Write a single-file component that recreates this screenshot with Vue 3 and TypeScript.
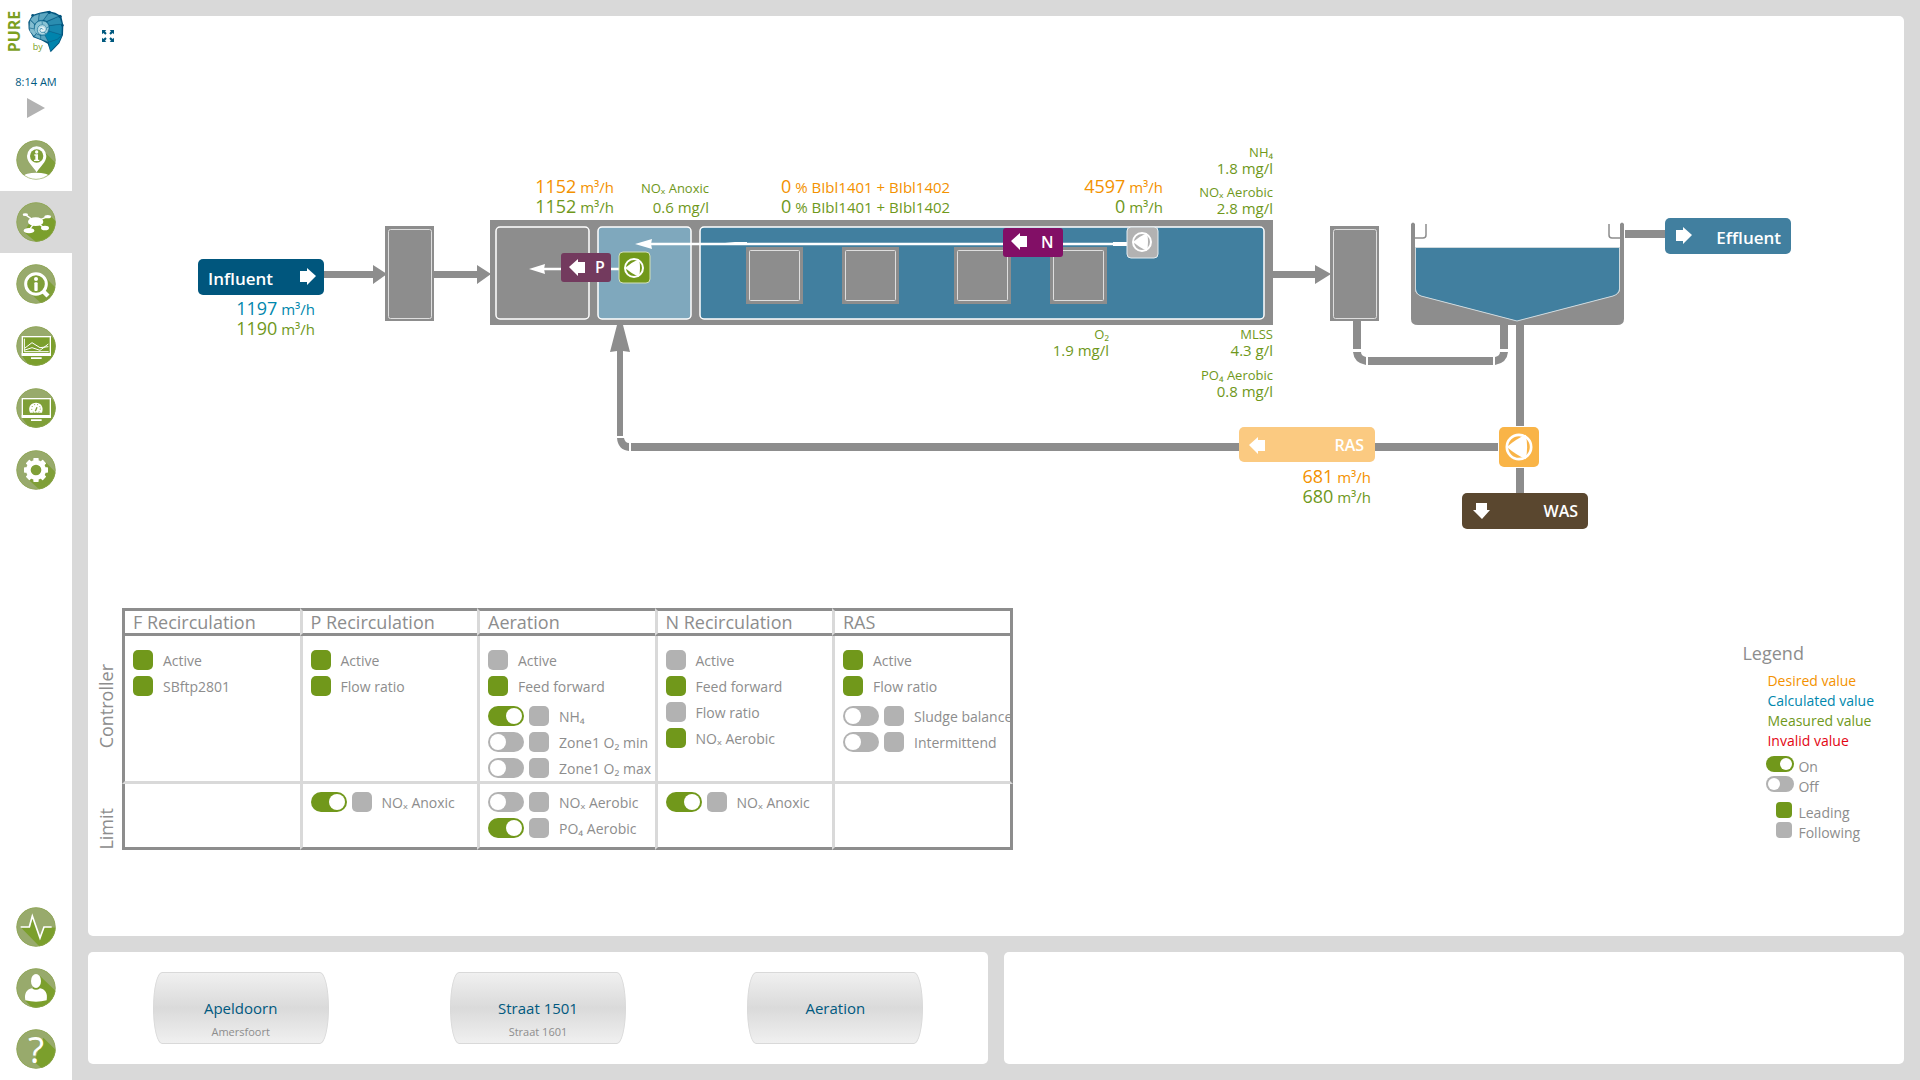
<script setup lang="ts">
import { reactive } from 'vue'

interface Item {
  label: string
  leading: boolean
  enabled?: boolean
}

interface Column {
  name: string
  controller: Item[]
  limit: Item[]
}

const columns = reactive<Column[]>([
  {
    name: 'F Recirculation',
    controller: [
      { label: 'Active', leading: true },
      { label: 'SBftp2801', leading: true },
    ],
    limit: [],
  },
  {
    name: 'P Recirculation',
    controller: [
      { label: 'Active', leading: true },
      { label: 'Flow ratio', leading: true },
    ],
    limit: [{ label: 'NOₓ Anoxic', leading: false, enabled: true }],
  },
  {
    name: 'Aeration',
    controller: [
      { label: 'Active', leading: false },
      { label: 'Feed forward', leading: true },
      { label: 'NH₄', leading: false, enabled: true },
      { label: 'Zone1 O₂ min', leading: false, enabled: false },
      { label: 'Zone1 O₂ max', leading: false, enabled: false },
    ],
    limit: [
      { label: 'NOₓ Aerobic', leading: false, enabled: false },
      { label: 'PO₄ Aerobic', leading: false, enabled: true },
    ],
  },
  {
    name: 'N Recirculation',
    controller: [
      { label: 'Active', leading: false },
      { label: 'Feed forward', leading: true },
      { label: 'Flow ratio', leading: false },
      { label: 'NOₓ Aerobic', leading: true },
    ],
    limit: [{ label: 'NOₓ Anoxic', leading: false, enabled: true }],
  },
  {
    name: 'RAS',
    controller: [
      { label: 'Active', leading: true },
      { label: 'Flow ratio', leading: true },
      { label: 'Sludge balance', leading: false, enabled: false },
      { label: 'Intermittend', leading: false, enabled: false },
    ],
    limit: [],
  },
])

const sections = [
  { key: 'controller', title: 'Controller' },
  { key: 'limit', title: 'Limit' },
] as const

const legendValues = [
  { label: 'Desired value', tone: 'desired' },
  { label: 'Calculated value', tone: 'calculated' },
  { label: 'Measured value', tone: 'measured' },
  { label: 'Invalid value', tone: 'invalid' },
]

/* Flow readings: number followed by its unit, right aligned on x */
const flows = [
  { value: '1197', x: 315, y: 315, tone: 'calculated' },
  { value: '1190', x: 315, y: 335, tone: 'measured' },
  { value: '1152', x: 614, y: 193, tone: 'desired' },
  { value: '1152', x: 614, y: 213, tone: 'measured' },
  { value: '4597', x: 1163, y: 193, tone: 'desired' },
  { value: '0', x: 1163, y: 213, tone: 'measured' },
  { value: '681', x: 1371, y: 483, tone: 'desired' },
  { value: '680', x: 1371, y: 503, tone: 'measured' },
]

/* Sensor readings: name above, value below */
const sensors = [
  { name: 'NOₓ Anoxic', value: '0.6 mg/l', x: 709, y: 193, step: 20 },
  { name: 'NH₄', value: '1.8 mg/l', x: 1273, y: 157, step: 17 },
  { name: 'NOₓ Aerobic', value: '2.8 mg/l', x: 1273, y: 197, step: 17 },
  { name: 'O₂', value: '1.9 mg/l', x: 1109, y: 339, step: 17 },
  { name: 'MLSS', value: '4.3 g/l', x: 1273, y: 339, step: 17 },
  { name: 'PO₄ Aerobic', value: '0.8 mg/l', x: 1273, y: 380, step: 17 },
]

const aerators = [746, 842, 954, 1050]

const tanks = [
  { title: 'Apeldoorn', subtitle: 'Amersfoort' },
  { title: 'Straat 1501', subtitle: 'Straat 1601' },
  { title: 'Aeration', subtitle: '' },
]

const teeth = [0, 45, 90, 135, 180, 225, 270, 315]
</script>

<template>
  <div class="app">
    <aside class="sidebar">
      <svg class="logo" viewBox="0 0 216 180" role="img" aria-label="PURE">
        <text class="pure" transform="translate(60 157) rotate(-90)">PURE</text>
        <text class="by" x="98" y="150">by</text>
        <path fill="#00537c" d="M86 88 85 66 97 45 118 38 144 33 166 38 184 49 190 76 189 105 178 130 152 157 143 131 124 121 100 112Z" />
        <g stroke="#0f6288" stroke-width="1">
          <path fill="#0084ad" d="M151 154 146 127 172 118 186 106 176 128Z" />
          <path fill="#0084ad" d="M146 126 134 106 148 94 185 105 172 118Z" />
          <path fill="#1687ae" d="M147 93 148 77 186 73 185 104Z" />
          <path fill="#2b8db0" d="M148 76 141 65 178 49 186 72Z" />
          <path fill="#459ab8" d="M140 64 131 60 148 37 177 48Z" />
          <path fill="#5ba6c0" d="M130 60 116 62 118 41 147 37Z" />
          <path fill="#6db0c7" d="M115 62 104 72 91 59 99 48 117 42Z" />
          <path fill="#83bdd0" d="M103 73 102 87 88 83 90 60Z" />
          <path fill="#83bdd0" d="M102 87 109 100 102 109 90 94 88 84Z" />
          <path fill="#6db0c7" d="M109 101 122 107 122 118 103 110Z" />
          <path fill="#5ba6c0" d="M123 106 134 105 145 126 122 118Z" />
        </g>
        <path fill="#8ac3d4" d="M103 88Q102 62 126 62 148 64 147 86 144 105 126 106 106 104 103 88Z" />
        <path fill="#b5dae4" d="M112 89Q112 74 127 73 144 76 142 92 137 103 125 102 113 99 112 89Z" />
        <path fill="#e6f3f6" d="M117 89Q119 79 128 80 137 83 134 92 128 98 121 96Z" />
        <path fill="none" stroke="#1a7399" stroke-width="2" d="M103 88Q102 62 126 62 148 64 147 86 144 105 126 106 111 103 112 88 114 74 128 74 142 77 139 91 134 100 124 97 117 93 121 86 127 83 129 89M126 62 127 73M146 80 140 84M137 102 133 96" />
        <g fill="#00537c">
          <circle cx="148" cy="37" r="5" /><circle cx="180" cy="49" r="5" /><circle cx="187" cy="76" r="4" /><circle cx="98" cy="46" r="4" />
        </g>
      </svg>
      <time class="clock">8:14 AM</time>
      <button class="play" type="button" aria-label="Play">
        <svg viewBox="0 0 18 20"><path fill="#b2b2b2" d="M0 0 18 10 0 20Z" /></svg>
      </button>

      <svg class="defs" aria-hidden="true">
        <defs>
          <clipPath id="disc"><circle cx="60" cy="60" r="59" /></clipPath>
        </defs>
      </svg>

      <nav class="nav" aria-label="Views">
        <button type="button" aria-label="Location">
          <svg viewBox="0 0 120 120">
            <g clip-path="url(#disc)">
              <circle cx="60" cy="60" r="60" fill="#98aa6c" />
              <path fill="#7f9f38" d="M82 32 120 70V120H88L62 98Z" />
              <ellipse cx="61" cy="110" rx="38" ry="12" fill="#fff" />
              <path fill="#fff" d="M62 97C50 78 33 66 33 48a29 29 0 0 1 58 0C91 66 74 78 62 97Z" />
              <circle cx="62" cy="48" r="20" fill="#7f9f38" />
              <circle cx="62" cy="36" r="5" fill="#fff" />
              <path fill="#fff" d="M55 43H66V59H70V63H54V59H58V47H55Z" />
              <circle class="rim" cx="60" cy="60" r="58" />
            </g>
          </svg>
        </button>
        <button class="active" type="button" aria-label="Process">
          <svg viewBox="0 0 120 120">
            <g clip-path="url(#disc)">
              <circle cx="60" cy="60" r="60" fill="#98aa6c" />
              <path fill="#7b9f2c" d="M40 64 102 42 120 58V120H60L24 90Z" />
              <path stroke="#fff" stroke-width="4" d="M28 38 58 59 95 44M38 86 58 59 86 78" fill="none" />
              <g fill="#fff">
                <ellipse cx="59" cy="59" rx="23" ry="13" /><ellipse cx="28" cy="38" rx="8" ry="4" />
                <ellipse cx="95" cy="44" rx="10" ry="5" /><ellipse cx="39" cy="86" rx="16" ry="8" /><ellipse cx="87" cy="78" rx="12" ry="7" />
              </g>
              <circle class="rim" cx="60" cy="60" r="58" />
            </g>
          </svg>
        </button>
        <button type="button" aria-label="Inspect">
          <svg viewBox="0 0 120 120">
            <g clip-path="url(#disc)">
              <circle cx="60" cy="60" r="60" fill="#98aa6c" />
              <path fill="#7f9f38" d="M84 36 120 72V120H78L38 84Z" />
              <path stroke="#fff" stroke-width="13" d="M80 80 96 96" />
              <circle cx="60" cy="60" r="31" fill="#7f9f38" stroke="#fff" stroke-width="9" />
              <circle cx="60" cy="45" r="6" fill="#fff" />
              <rect x="55" y="55" width="10" height="26" rx="3" fill="#fff" />
              <circle class="rim" cx="60" cy="60" r="58" />
            </g>
          </svg>
        </button>
        <button type="button" aria-label="Trends">
          <svg viewBox="0 0 120 120">
            <g clip-path="url(#disc)">
              <circle cx="60" cy="60" r="60" fill="#98aa6c" />
              <path fill="#7b9f2c" d="M104 30 120 46V120H40L17 88Z" />
              <rect x="19" y="32" width="84" height="54" fill="#7b9f2c" stroke="#fff" stroke-width="4" />
              <path fill="#fff" d="M17 81H105V90H17ZM45 94H77V99H45Z" />
              <g fill="none" stroke="#fff" stroke-width="3">
                <path d="M25 38V77H98M27 66 48 50 72 65 97 62" />
                <path d="M27 72 48 65 72 73 97 54" />
              </g>
              <circle class="rim" cx="60" cy="60" r="58" />
            </g>
          </svg>
        </button>
        <button type="button" aria-label="Dashboard">
          <svg viewBox="0 0 120 120">
            <g clip-path="url(#disc)">
              <circle cx="60" cy="60" r="60" fill="#98aa6c" />
              <path fill="#7f9f38" d="M104 30 120 46V120H40L17 88Z" />
              <rect x="19" y="32" width="84" height="54" fill="#7f9f38" stroke="#fff" stroke-width="4" />
              <path fill="#fff" d="M17 81H105V90H17ZM45 94H77V99H45Z" />
              <path fill="#fff" d="M42 74C34 56 46 44 60 44S84 56 78 74Z" />
              <circle cx="60" cy="62" r="13" fill="none" stroke="#7f9f38" stroke-width="3" stroke-dasharray="3 6" />
              <path stroke="#7f9f38" stroke-width="4" d="M58 70 63 58" />
              <circle class="rim" cx="60" cy="60" r="58" />
            </g>
          </svg>
        </button>
        <button type="button" aria-label="Settings">
          <svg viewBox="0 0 120 120">
            <g clip-path="url(#disc)">
              <circle cx="60" cy="60" r="60" fill="#98aa6c" />
              <path fill="#7f9f38" d="M86 34 120 68V120H72L34 86Z" />
              <rect v-for="a in teeth" :key="a" x="52" y="24" width="16" height="14" rx="2" fill="#fff" :transform="`rotate(${a} 60 60)`" />
              <circle cx="60" cy="60" r="23" fill="#7f9f38" stroke="#fff" stroke-width="14" />
              <circle class="rim" cx="60" cy="60" r="58" />
            </g>
          </svg>
        </button>
      </nav>

      <nav class="nav nav-bottom" aria-label="General">
        <button type="button" aria-label="Status">
          <svg viewBox="0 0 120 120">
            <g clip-path="url(#disc)">
              <circle cx="60" cy="60" r="60" fill="#98aa6c" />
              <path fill="#7b9f2c" d="M14 61 42 61 50 28 72 92 86 60 120 62V120H72Z" />
              <path fill="none" stroke="#fff" stroke-width="5" d="M14 60H40L49 27 72 93 84 60H107" />
              <circle class="rim" cx="60" cy="60" r="58" />
            </g>
          </svg>
        </button>
        <button type="button" aria-label="Account">
          <svg viewBox="0 0 120 120">
            <g clip-path="url(#disc)">
              <circle cx="60" cy="60" r="60" fill="#98aa6c" />
              <path fill="#7b9f2c" d="M72 24 120 70V120H50L28 98Z" />
              <ellipse cx="60" cy="39" rx="15" ry="21" fill="#fff" />
              <path fill="#fff" d="M48 61Q60 70 72 61C88 64 96 76 92 97Q60 105 28 97C24 76 32 64 48 61Z" />
              <circle class="rim" cx="60" cy="60" r="58" />
            </g>
          </svg>
        </button>
        <button type="button" aria-label="Help">
          <svg viewBox="0 0 120 120">
            <g clip-path="url(#disc)">
              <circle cx="60" cy="60" r="60" fill="#98aa6c" />
              <path fill="#7b9f2c" d="M82 26 120 64V120H80L54 98Z" />
              <circle class="rim" cx="60" cy="60" r="58" />
            </g>
            <text class="mark" x="60" y="101" text-anchor="middle">?</text>
          </svg>
        </button>
      </nav>
    </aside>

    <main class="main">
      <section class="panel process">
        <div class="toolbar">
          <button class="expand" type="button" aria-label="Full screen">
            <svg viewBox="0 0 36 36">
              <g fill="#00597f">
                <path d="M0 0H13L9 4 14 10 10 14 4 9 0 13Z" />
                <path d="M36 0H23L27 4 22 10 26 14 32 9 36 13Z" />
                <path d="M0 36H13L9 32 14 26 10 22 4 27 0 23Z" />
                <path d="M36 36H23L27 32 22 26 26 22 32 27 36 23Z" />
              </g>
            </svg>
          </button>
        </div>

        <svg class="diagram" viewBox="88 50 1816 526" role="img" aria-label="Process diagram">
          <defs>
            <path id="arrow" fill="#fff" d="M0 3H7V0L16 8 7 17V14H0Z" />
            <g id="pump">
              <circle r="9" fill="none" stroke="#fff" stroke-width="2" />
              <path fill="#fff" d="M-9 0Q-2-6 5-9Q7 0 5 9Q-2 6-9 0Z" />
            </g>
          </defs>

          <!-- Pipes -->
          <g fill="#8d8d8d">
            <path d="M324 271H373V265L387 274 373 284V278H324Z" />
            <path d="M434 271H477V265L491 274 477 284V278H434Z" />
            <path d="M1273 271H1315V265L1331 274 1315 284V278H1273Z" />
            <path d="M617 436V351L610 352 617 325H623L630 352 623 351V436Z" />
            <path d="M617 438H624Q625 443 629 443V451Q618 450 617 438Z" />
            <rect x="631" y="443" width="609" height="8" />
            <rect x="1374" y="443" width="124" height="8" />
            <rect x="1353" y="320" width="8" height="29" />
            <path d="M1353 352H1361Q1361 356 1366 357V365Q1354 363 1353 352Z" />
            <rect x="1368" y="357" width="125" height="8" />
            <path d="M1508 352H1500Q1500 356 1495 357V365Q1507 363 1508 352Z" />
            <rect x="1500" y="324" width="8" height="25" />
            <rect x="1516" y="324" width="8" height="102" />
            <rect x="1516" y="468" width="8" height="26" />
            <rect x="1625" y="230" width="41" height="8" />
          </g>

          <!-- Basins -->
          <g fill="#8d8d8d">
            <rect x="385" y="226" width="49" height="95" />
            <rect x="490" y="220" width="783" height="105" />
            <rect x="1330" y="226" width="49" height="95" />
          </g>
          <g fill="none" stroke="#dedede">
            <rect x="388.5" y="229.5" width="43" height="89" rx="2" />
            <rect x="1333.5" y="229.5" width="43" height="89" rx="2" />
          </g>
          <g stroke="#fff" stroke-width="1.5">
            <rect x="496" y="227" width="93" height="92" rx="4" fill="#8d8d8d" />
            <rect x="598" y="227" width="93" height="92" rx="4" fill="#7fa8bd" />
            <rect x="700" y="227" width="564" height="92" rx="4" fill="#417f9f" />
          </g>
          <g v-for="x in aerators" :key="x" fill="#8d8d8d">
            <rect :x="x" y="247" width="57" height="57" />
            <rect :x="x + 3.5" y="250.5" width="50" height="50" rx="1" stroke="#dedede" />
          </g>

          <!-- Internal recirculation -->
          <path fill="none" stroke="#fff" stroke-width="2.5" d="M650 244H1127M543 269H620" />
          <path fill="#fff" d="M635 244 652 239 651 244 652 249ZM529 269 545 264 544 269 545 274ZM725 243 735 242H747V245H735ZM1113 242H1127V246H1113Z" />
          <rect x="561" y="253" width="50" height="29" rx="3" fill="#733a5e" />
          <use href="#arrow" transform="translate(585 259) scale(-1 1)" />
          <text class="tag" x="595" y="273">P</text>
          <rect x="619" y="252" width="31" height="31" rx="4" fill="#71981b" stroke="#d4e0ba" />
          <use href="#pump" x="634" y="268" />
          <rect x="1003" y="228" width="60" height="29" rx="3" fill="#820f66" />
          <use href="#arrow" transform="translate(1027 233) scale(-1 1)" />
          <text class="tag" x="1041" y="248">N</text>
          <rect x="1127" y="227" width="31" height="31" rx="4" fill="#b2b2b2" stroke="#e4edf1" />
          <use href="#pump" x="1142" y="242" />

          <!-- Clarifier -->
          <path fill="#8d8d8d" d="M1411 224Q1413 221 1415 224V289Q1415 294 1421 296L1517 321 1613 296Q1620 294 1620 289V224Q1622 221 1624 224V319Q1624 325 1617 325H1418Q1411 325 1411 319Z" />
          <path fill="#417f9f" stroke="#cfd9dd" d="M1415.500 247.500H1619.500V289Q1619 294 1613 296L1517 321 1421 296Q1416 294 1415.500 289Z" />
          <path fill="none" stroke="#8d8d8d" stroke-width="1.500" d="M1426 224V235Q1426 238 1423 238H1414M1609 224V235Q1609 238 1612 238H1622" />

          <!-- Labelled streams -->
          <rect x="198" y="259" width="126" height="36" rx="5" fill="#00567d" />
          <use href="#arrow" x="300" y="268" />
          <text class="tag stream" x="208" y="285">Influent</text>

          <rect x="1665" y="218" width="126" height="36" rx="5" fill="#417f9f" />
          <use href="#arrow" x="1676" y="227" />
          <text class="tag stream" x="1781" y="244" text-anchor="end">Effluent</text>

          <rect x="1239" y="427" width="136" height="35" rx="5" fill="#fbca81" />
          <use href="#arrow" transform="translate(1265 437) scale(-1 1)" />
          <text class="tag" x="1364" y="451" text-anchor="end">RAS</text>

          <rect x="1499" y="427" width="40" height="40" rx="5" fill="#f9b447" />
          <use href="#pump" transform="translate(1519 447) scale(1.350)" />

          <rect x="1462" y="493" width="126" height="36" rx="5" fill="#5a472f" />
          <use href="#arrow" transform="translate(1490 503) rotate(90)" />
          <text class="tag" x="1578" y="517" text-anchor="end">WAS</text>

          <!-- Readings -->
          <text v-for="f in flows" :key="`${f.x}-${f.y}`" :class="f.tone" :x="f.x" :y="f.y" text-anchor="end">
            <tspan class="number">{{ f.value }}</tspan><tspan class="unit">{{ ' m³/h' }}</tspan>
          </text>
          <text class="desired" x="781" y="193"><tspan class="number">0</tspan><tspan class="unit"> % BIbl1401 + BIbl1402</tspan></text>
          <text class="measured" x="781" y="213"><tspan class="number">0</tspan><tspan class="unit"> % BIbl1401 + BIbl1402</tspan></text>
          <g v-for="s in sensors" :key="s.name" class="measured" text-anchor="end">
            <text class="sensor" :x="s.x" :y="s.y">{{ s.name }}</text>
            <text class="amount" :x="s.x" :y="s.y + s.step">{{ s.value }}</text>
          </g>
        </svg>

        <div class="lower">
          <table class="control">
            <thead>
              <tr>
                <td class="corner"></td>
                <th v-for="c in columns" :key="c.name" scope="col">{{ c.name }}</th>
              </tr>
            </thead>
            <tbody>
              <tr v-for="s in sections" :key="s.key" :class="s.key">
                <th scope="row"><span>{{ s.title }}</span></th>
                <td v-for="c in columns" :key="c.name">
                  <ul>
                    <li v-for="item in c[s.key]" :key="item.label" :class="{ switchable: item.enabled !== undefined }">
                      <label>
                        <input v-if="item.enabled !== undefined" v-model="item.enabled" class="toggle" type="checkbox" role="switch">
                        <i class="lamp" :class="{ lit: item.leading }"></i>
                        <span>{{ item.label }}</span>
                      </label>
                    </li>
                  </ul>
                </td>
              </tr>
            </tbody>
          </table>

          <section class="legend">
            <h2>Legend</h2>
            <ul class="values">
              <li v-for="v in legendValues" :key="v.tone" :class="v.tone">{{ v.label }}</li>
            </ul>
            <ul class="keys">
              <li><i class="pill on"></i>On</li>
              <li><i class="pill"></i>Off</li>
            </ul>
            <ul class="keys">
              <li><i class="lamp lit"></i>Leading</li>
              <li><i class="lamp"></i>Following</li>
            </ul>
          </section>
        </div>
      </section>

      <div class="bottom">
        <section class="panel tanks">
          <button v-for="t in tanks" :key="t.title" class="tank" type="button">
            <span class="title">{{ t.title }}</span>
            <span class="subtitle">{{ t.subtitle }}</span>
          </button>
        </section>
        <section class="panel"></section>
      </div>
    </main>
  </div>
</template>

<style>
body {
  margin: 0;
  background: #d9d9d9;
}
</style>

<style scoped>
.app {
  display: flex;
  min-height: 100vh;
  background: #d9d9d9;
  color: #8d8d8d;
  font-family: "Trebuchet MS", "Open Sans", "Noto Sans", sans-serif;
  font-size: 14px;
}
button {
  padding: 0;
  border: 0;
  background: none;
  font: inherit;
  cursor: pointer;
}
svg {
  display: block;
}
ul {
  margin: 0;
  padding: 0;
  list-style: none;
}

/* Sidebar */
.sidebar {
  display: flex;
  box-sizing: border-box;
  flex: none;
  flex-direction: column;
  align-items: center;
  width: 72px;
  padding-bottom: 1px;
  background: #fff;
}
.logo {
  width: 72px;
  height: 60px;
}
.pure {
  fill: #7b9f1f;
  font-size: 48px;
  font-weight: 700;
}
.by {
  fill: #7b9f1f;
  font-size: 27px;
}
.clock {
  margin-top: 14px;
  color: #00597f;
  font-size: 11px;
  line-height: 16px;
}
.play {
  width: 18px;
  height: 20px;
  margin: 8px 0 11px;
}
.defs {
  width: 0;
  height: 0;
}
.nav {
  display: flex;
  flex-direction: column;
  width: 100%;
}
.nav button {
  display: flex;
  align-items: center;
  justify-content: center;
  height: 62px;
}
.nav .active {
  background: #d9d9d9;
}
.nav svg {
  width: 40px;
  height: 40px;
  overflow: visible;
}
.nav-bottom {
  margin-top: auto;
}
.nav-bottom button {
  height: 61px;
}
.rim {
  fill: none;
  stroke: #8ea650;
  stroke-width: 3px;
  opacity: 0.7;
}
.mark {
  fill: #fff;
  font-size: 112px;
}

/* Panels */
.main {
  display: flex;
  flex: 1;
  flex-direction: column;
  gap: 16px;
  min-width: 0;
  padding: 16px;
}
.panel {
  border-radius: 5px;
  background: #fff;
}
.process {
  flex: 1;
}
.toolbar {
  display: flex;
  padding: 14px 14px 8px;
}
.expand,
.expand svg {
  width: 12px;
  height: 12px;
}
.diagram {
  width: 100%;
  height: auto;
}

/* Diagram text */
.tag {
  fill: #fff;
  font-size: 16px;
  font-weight: 600;
}
.stream {
  font-size: 17px;
}
.number {
  font-size: 18px;
}
.unit,
.amount {
  font-size: 15px;
}
.sensor {
  font-size: 13px;
}
.desired {
  fill: #f39200;
  color: #f39200;
}
.calculated {
  fill: #0087ad;
  color: #0087ad;
}
.measured {
  fill: #6f981b;
  color: #6f981b;
}
.invalid {
  color: #e30613;
}

/* Control table */
.lower {
  display: flex;
  align-items: flex-start;
  justify-content: space-between;
  padding: 32px 30px 16px 8px;
}
.control {
  width: 917px;
  border-collapse: separate;
  border-spacing: 0;
  table-layout: fixed;
}
.corner {
  width: 26px;
}
.control th,
.control td {
  box-sizing: border-box;
  padding: 0;
  text-align: left;
  vertical-align: top;
}
.control thead th {
  height: 28px;
  padding-left: 8px;
  border-top: 3px solid #8d8d8d;
  border-bottom: 3px solid #8d8d8d;
  border-left: 3px solid #d9d9d9;
  font-size: 18px;
  font-weight: 400;
  line-height: 22px;
}
.control thead th:last-child {
  width: 181px;
}
.control tbody td {
  padding-left: 8px;
  border-bottom: 3px solid #d9d9d9;
  border-left: 3px solid #d9d9d9;
}
.control tr > :nth-child(2) {
  border-left-color: #8d8d8d;
}
.control tr > :last-child {
  border-right: 3px solid #8d8d8d;
}
.control .controller td {
  height: 148px;
  padding-top: 14px;
}
.control .limit td {
  height: 66px;
  padding-top: 8px;
  border-bottom-color: #8d8d8d;
}
.control tbody th {
  font-size: 18px;
  font-weight: 400;
  line-height: 20px;
  vertical-align: bottom;
}
.control tbody th span {
  display: block;
  writing-mode: vertical-rl;
  transform: rotate(180deg);
}
.control .controller th {
  padding-bottom: 36px;
}
.control ul {
  display: flex;
  flex-direction: column;
  gap: 6px;
}
.controller li:not(.switchable) + .switchable {
  margin-top: 4px;
}
.control label {
  display: flex;
  align-items: center;
  height: 20px;
  white-space: nowrap;
}
.lamp {
  flex: none;
  width: 20px;
  height: 20px;
  margin-right: 10px;
  border-radius: 5px;
  background: #b2b2b2;
}
.lamp.lit {
  background: #71981b;
}
.toggle {
  flex: none;
  width: 36px;
  height: 20px;
  margin: 0 5px 0 0;
  border-radius: 10px;
  background: #b2b2b2;
  appearance: none;
  cursor: pointer;
}
.toggle::before {
  display: block;
  width: 16px;
  height: 16px;
  margin: 2px;
  border-radius: 50%;
  background: #fff;
  content: "";
}
.toggle:checked {
  background: #71981b;
}
.toggle:checked::before {
  margin-left: 18px;
}

/* Legend */
.legend {
  margin-top: 32px;
}
.legend h2 {
  margin: 0;
  font-size: 18px;
  font-weight: 400;
  line-height: 26px;
}
.legend .values {
  padding: 5px 0 0 25px;
}
.legend li {
  display: flex;
  height: 20px;
  line-height: 20px;
}
.legend .keys {
  padding: 5px 0 1px 24px;
}
.legend .keys li {
  line-height: 22px;
}
.pill {
  width: 28px;
  height: 16px;
  margin-right: 4px;
  border-radius: 8px;
  background: #b2b2b2;
}
.pill::before {
  display: block;
  width: 12px;
  height: 12px;
  margin: 2px;
  border-radius: 50%;
  background: #fff;
  content: "";
}
.pill.on {
  background: #71981b;
}
.pill.on::before {
  margin-left: 14px;
}
.legend .lamp {
  width: 16px;
  height: 16px;
  margin: 0 6px 0 10px;
  border-radius: 4px;
}

/* Bottom row */
.bottom {
  display: grid;
  grid-template-columns: 1fr 1fr;
  gap: 16px;
}
.bottom .panel {
  min-height: 112px;
}
.tanks {
  display: grid;
  grid-template-columns: repeat(3, 1fr);
  align-items: center;
  justify-items: center;
  padding: 0 4px;
}
.tank {
  display: flex;
  box-sizing: border-box;
  flex-direction: column;
  align-items: center;
  width: 176px;
  height: 72px;
  padding-top: 24px;
  border: 1px solid #d9d9d9;
  border-radius: 9px / 36px;
  background: linear-gradient(#f0f0f0, #dadada 50%, #f0f0f0);
}
.title {
  color: #00597f;
  font-size: 15px;
  line-height: 22px;
}
.subtitle {
  color: #8d8d8d;
  font-size: 11px;
  line-height: 26px;
}
</style>
